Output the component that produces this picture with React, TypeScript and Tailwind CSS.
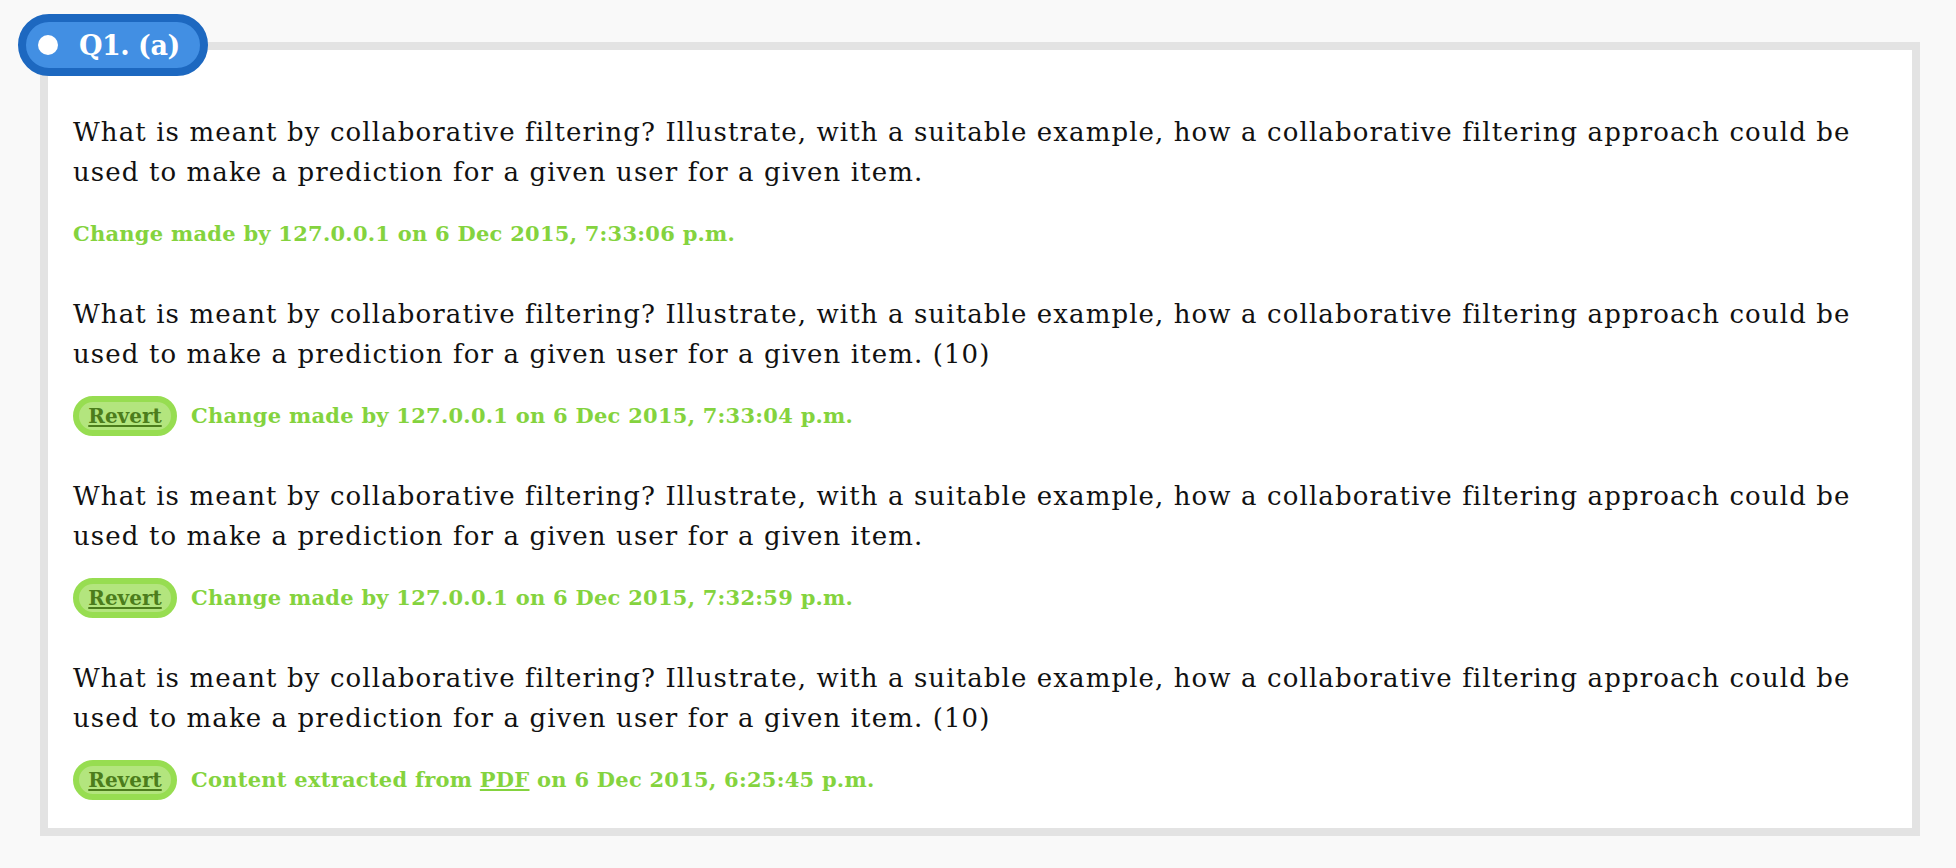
import type { ReactNode } from "react";

type Revision = {
  text: string;
  revert: boolean;
  meta: ReactNode;
};

const QUESTION =
  "What is meant by collaborative filtering? Illustrate, with a suitable example, how a collaborative filtering approach could be used to make a prediction for a given user for a given item.";

const revisions: Revision[] = [
  { text: QUESTION, revert: false, meta: "Change made by 127.0.0.1 on 6 Dec 2015, 7:33:06 p.m." },
  { text: QUESTION + " (10)", revert: true, meta: "Change made by 127.0.0.1 on 6 Dec 2015, 7:33:04 p.m." },
  { text: QUESTION, revert: true, meta: "Change made by 127.0.0.1 on 6 Dec 2015, 7:32:59 p.m." },
  {
    text: QUESTION + " (10)",
    revert: true,
    meta: (
      <>
        Content extracted from <a href="#" className="underline underline-offset-2">PDF</a> on 6 Dec 2015, 6:25:45 p.m.
      </>
    ),
  },
];

export default function App() {
  return (
    <div className="min-h-[868px] w-full bg-[#f9f9f9] pt-[42px] pl-[40px] font-['DejaVu_Serif',serif]">
      <div className="relative w-[1880px] border-8 border-[#e3e3e3] bg-white pt-[62px] pr-[25px] pb-[28px] pl-[25px]">
        <div className="absolute -top-[36px] -left-[30px] flex h-[62px] w-[190px] items-center gap-[21px] rounded-full border-8 border-[#1d68c0] bg-[#428fe3] pl-[12px] text-white">
          <span className="h-[20px] w-[20px] rounded-full bg-white" />
          <span className="text-[27px] font-semibold leading-none tracking-[-0.5px]">Q1. (a)</span>
        </div>

        <div className="flex flex-col gap-[40px]">
          {revisions.map((r, i) => (
            <div key={i} className="flex flex-col gap-[22px]">
              <p className="text-[26px] leading-[40px] tracking-[1.1px] text-[#111]">{r.text}</p>
              <div className="flex h-[40px] items-center gap-[14px]">
                {r.revert && (
                  <button className="flex h-[40px] w-[104px] items-center justify-center rounded-full border-[6px] border-[#97dd51] bg-[#b3e57e] text-[20px] font-semibold text-[#4c7d1c] underline underline-offset-2">
                    Revert
                  </button>
                )}
                <span className="text-[21px] font-bold tracking-[0.25px] text-[#84d33e]">{r.meta}</span>
              </div>
            </div>
          ))}
        </div>
      </div>
    </div>
  );
}
